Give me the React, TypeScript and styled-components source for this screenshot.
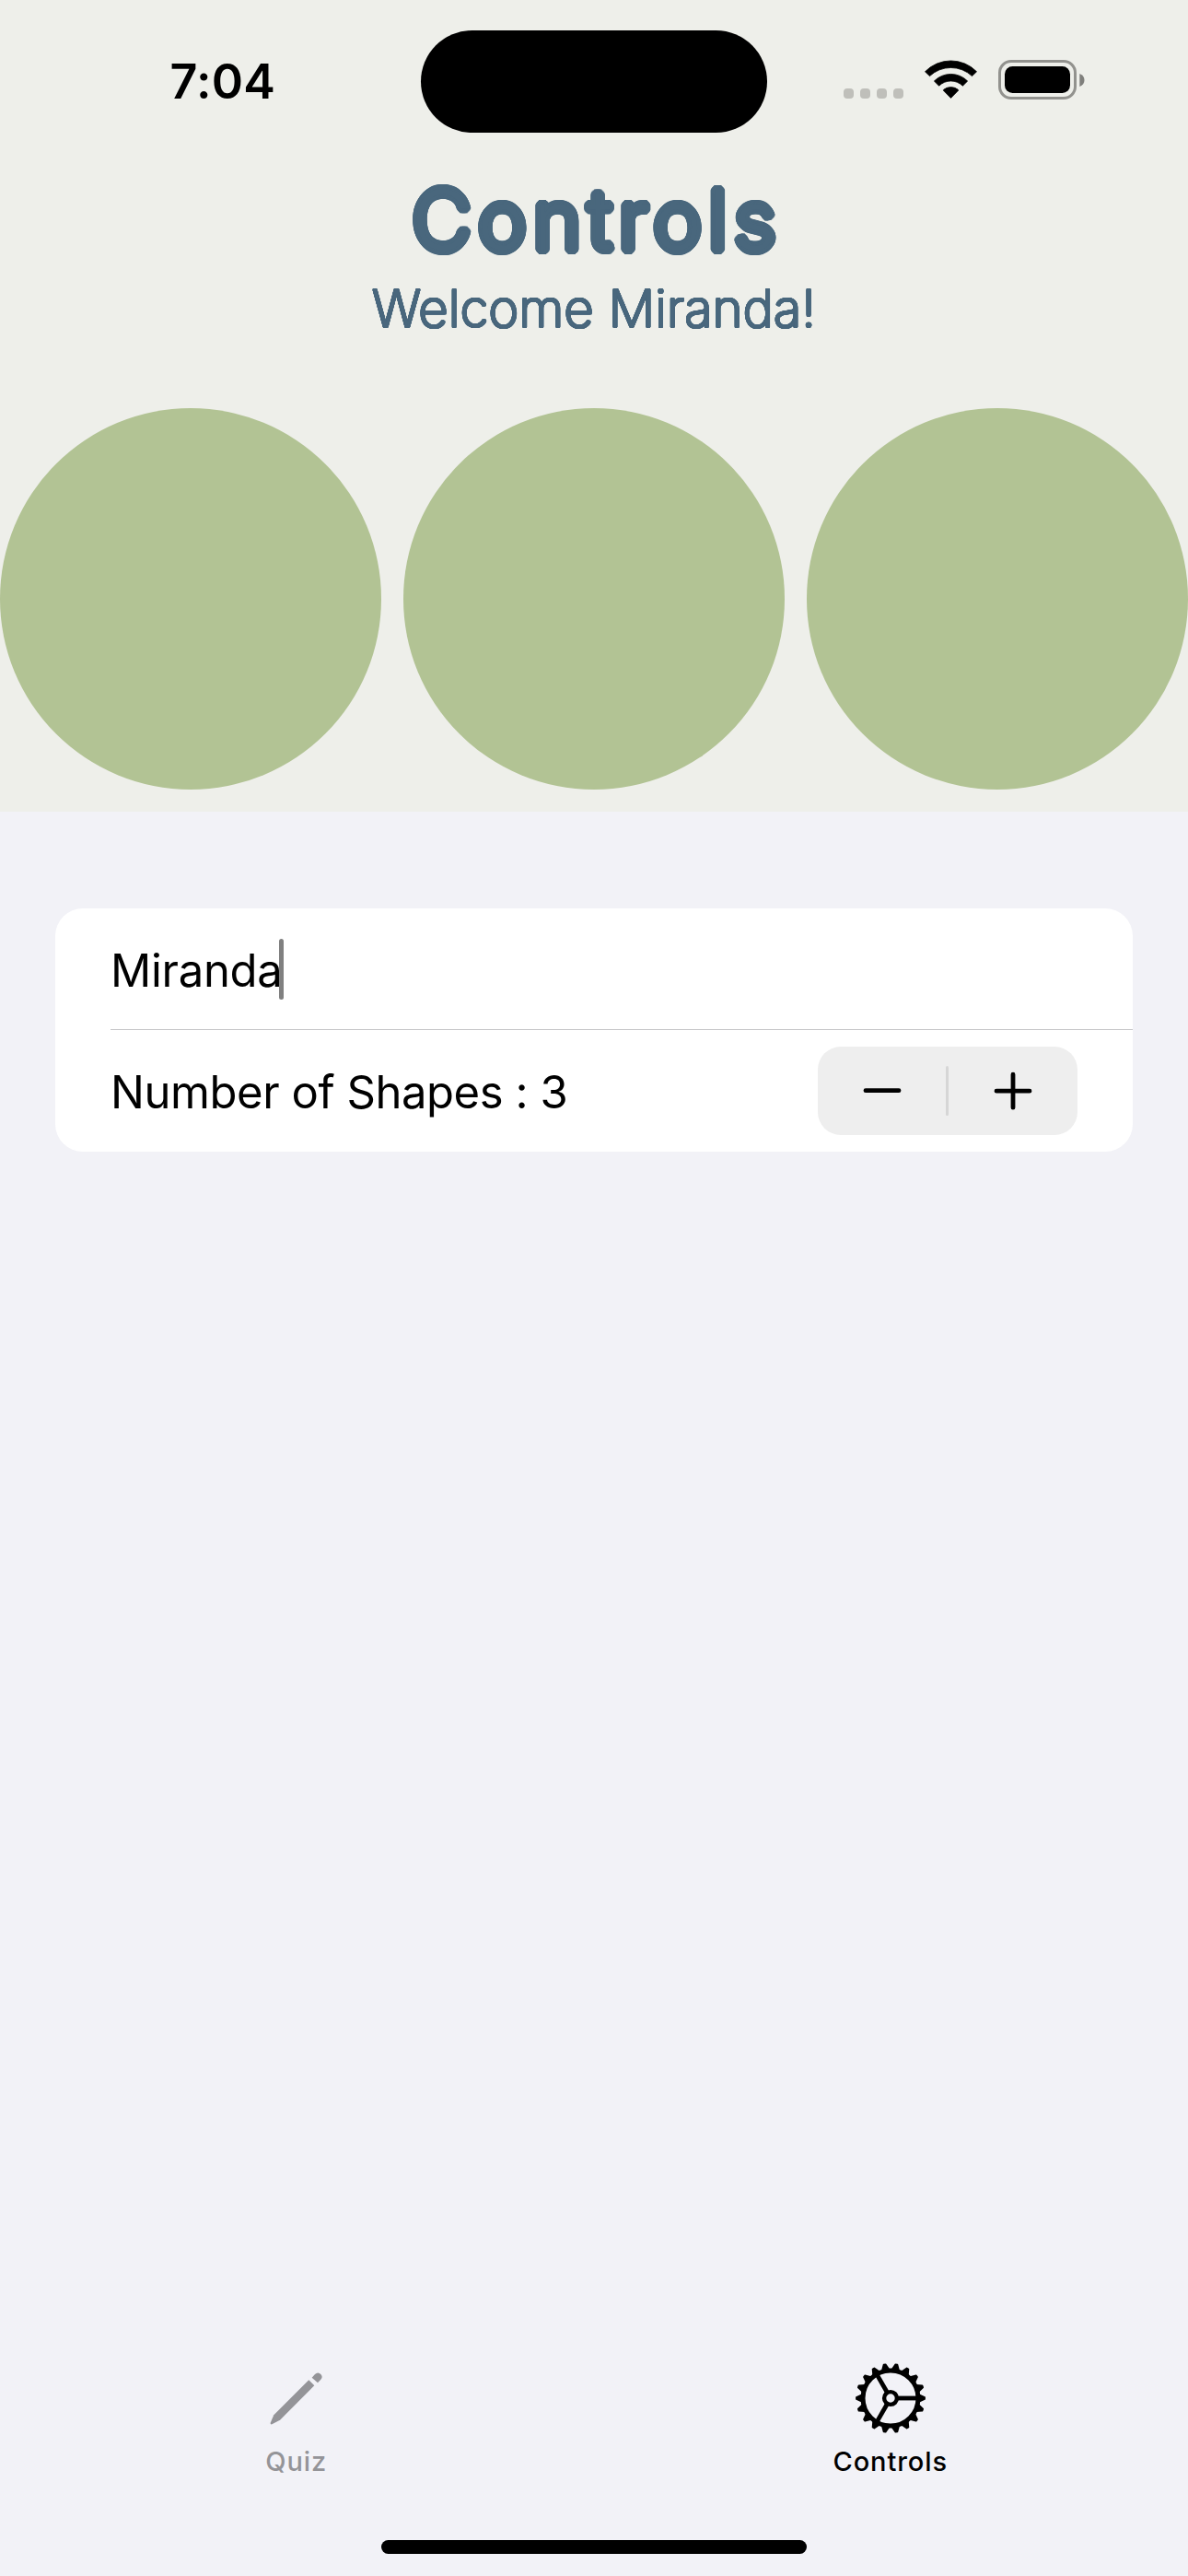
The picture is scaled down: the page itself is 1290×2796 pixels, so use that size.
import React, { useState } from 'react';
import styled, { createGlobalStyle } from 'styled-components';

const GlobalStyle = createGlobalStyle`
  * { box-sizing: border-box; }
  body { margin: 0; background: #f2f2f7; }
  svg { display: block; }
`;

/* Rounded letter ends: a light face thickened by a ring of shadows. */
const rounded = (radius: number, color: string) =>
  Array.from({ length: 24 }, (_, i) => {
    const a = (i * Math.PI) / 12;
    return `${(radius * Math.cos(a)).toFixed(2)}px ${(radius * Math.sin(a)).toFixed(2)}px 0 ${color}`;
  }).join(', ');

const accent = '#49677d';

const Screen = styled.div`
  display: flex;
  flex-direction: column;
  width: 1290px;
  height: 2796px;
  background: #f2f2f7;
  color: #000;
  font-family: Inter, "Liberation Sans", sans-serif;
  white-space: nowrap;
  overflow: hidden;
`;

const Header = styled.header`
  display: flex;
  flex-direction: column;
  height: 881px;
  background: #eeefea;
`;

const StatusBar = styled.div`
  display: flex;
  align-items: center;
  height: 177px;
`;

const Clock = styled.div`
  flex: 0 0 456.7px;
  padding-left: 184.6px;
  font-size: 52px;
  font-weight: 600;
  line-height: 64px;
  letter-spacing: 0.2px;
`;

const Island = styled.div`
  flex: 0 0 376.7px;
  height: 110.6px;
  border-radius: 56px;
  background: #000;
`;

const StatusIcons = styled.div`
  display: flex;
  align-items: center;
  padding: 0 0 4px 82.6px;
`;

const SignalDots = styled.div`
  display: flex;
  gap: 7px;
  margin: 30px 23px 0 0;
`;

const Dot = styled.span`
  width: 11px;
  height: 11px;
  border-radius: 4px;
  background: #bfbfba;
`;

const Battery = styled.div`
  display: flex;
  width: 85px;
  height: 43px;
  margin-left: 23px;
  padding: 4px;
  border: 3px solid #92928e;
  border-radius: 14px;
`;

const BatteryLevel = styled.div`
  flex: 1;
  border-radius: 8.5px;
  background: #000;
`;

const Title = styled.h1`
  margin: 0;
  text-align: center;
  font-size: 89px;
  font-weight: 300;
  line-height: 123px;
  letter-spacing: 7px;
  text-indent: 7px;
  color: ${accent};
  text-shadow: ${rounded(4.7, accent)}, ${rounded(2.4, accent)};
`;

const Welcome = styled.p`
  margin: 0 0 72px;
  text-align: center;
  font-size: 56px;
  font-weight: 200;
  line-height: 71px;
  letter-spacing: 0.2px;
  color: ${accent};
  text-shadow: ${rounded(1.2, accent)};
`;

const Shapes = styled.div`
  display: grid;
  grid-template-columns: repeat(3, 1fr);
  gap: 24px;
`;

const Circle = styled.div`
  height: 414px;
  border-radius: 50%;
  background: #b2c394;
`;

const Form = styled.section`
  margin: 105px 60px 0;
  border-radius: 30px;
  background: #fff;
  font-size: 49px;
  line-height: 60px;
`;

const Row = styled.div<{ $height: number }>`
  display: flex;
  align-items: center;
  justify-content: space-between;
  height: ${p => p.$height}px;
  padding: 0 60px;
`;

const NameField = styled.div`
  position: relative;
  padding-top: 5px;
  letter-spacing: -0.3px;
`;

const Caret = styled.span`
  position: absolute;
  top: 0;
  right: -2px;
  width: 5px;
  height: 66px;
  border-radius: 2.5px;
  background: #808080;
`;

const Divider = styled.div`
  height: 1px;
  margin-left: 60px;
  background: #c6c6c8;
`;

const CountLabel = styled.div`
  padding-top: 4px;
  letter-spacing: -0.45px;
`;

const Stepper = styled.div`
  display: flex;
  align-items: center;
  width: 282px;
  height: 96px;
  border-radius: 25px;
  background: #eeeeee;
`;

const StepButton = styled.button`
  flex: 1;
  display: flex;
  justify-content: center;
  padding: 0;
  border: 0;
  background: none;
`;

const StepDivider = styled.span`
  width: 3px;
  height: 54px;
  margin: 0 0.5px 0 -0.5px;
  border-radius: 1.5px;
  background: #d6d6d6;
`;

const Spacer = styled.div`
  flex: 1;
`;

const TabBar = styled.nav`
  display: grid;
  grid-template-columns: 1fr 1fr;
  margin-bottom: 67px;
`;

const Tab = styled.div<{ $color: string }>`
  display: flex;
  flex-direction: column;
  align-items: center;
  gap: 11px;
  padding-right: 1.6px;
  color: ${p => p.$color};
  font-size: 29px;
  font-weight: 500;
  line-height: 36px;
  letter-spacing: 0.9px;
`;

const TabIcon = styled.div`
  display: flex;
  align-items: center;
  justify-content: center;
  height: 80px;
`;

const HomeIndicator = styled.div`
  width: 462px;
  height: 15px;
  margin: 0 auto 24px;
  border-radius: 8px;
  background: #000;
`;

const WifiIcon = () => (
  <svg width="57" height="43" viewBox="0 0 57 43" fill="#000" stroke="#000" strokeWidth="0.8" strokeLinejoin="round">
    <path d="M0.5 12.8A39 39 0 0 1 56.5 12.8L51.5 17.6A33.5 33.5 0 0 0 5.5 17.6Z" />
    <path d="M10.4 23A25.4 25.4 0 0 1 46.6 23L41.4 28.2A18.5 18.5 0 0 0 15.6 28.2Z" />
    <path d="M20.2 32.9A12 12 0 0 1 36.8 32.9L28.5 41.4Z" />
  </svg>
);

const BatteryCap = () => (
  <svg width="9" height="14" viewBox="0 0 9 14">
    <path d="M3.3 0Q8.5 2 8.5 7T3.3 14Z" fill="#7f7f7c" />
  </svg>
);

const PencilIcon = () => (
  <svg width="60" height="60" viewBox="68 100 180 180" fill="currentColor">
    <path d="M198 131L216 149L104 261L78 275Q72 277 73 270L84 245Z" />
    <path d="M208 123L218 112Q228 103 237 112Q245 121 237 129L227 140Z" />
  </svg>
);

const GearIcon = () => (
  <svg width="78" height="78" viewBox="-39 -39 78 78" fill="none" stroke="currentColor">
    <circle r="30" strokeWidth="5" />
    {Array.from({ length: 18 }, (_, i) => (
      <path
        key={i}
        d="M31 -3.8L37 -1V1L31 3.8Z"
        transform={`rotate(${i * 20})`}
        fill="currentColor"
        strokeWidth="1.8"
        strokeLinejoin="round"
      />
    ))}
    {[0, 120, 240].map(a => (
      <path key={a} d="M7 0H29" strokeWidth="4.8" transform={`rotate(${a})`} />
    ))}
    <circle r="6.9" strokeWidth="4.4" />
  </svg>
);

const StepIcon = ({ plus }: { plus?: boolean }) => (
  <svg width="42" height="42" viewBox="0 0 42 42" stroke="#000" strokeWidth="4.8" strokeLinecap="round">
    <path d={plus ? 'M3 21.2H39M21 3.2V39.2' : 'M3 20.7H39'} />
  </svg>
);

export default function App() {
  const [count] = useState(3);
  const name = 'Miranda';
  return (
    <Screen>
      <GlobalStyle />
      <Header>
        <StatusBar>
          <Clock>7:04</Clock>
          <Island />
          <StatusIcons>
            <SignalDots>
              <Dot />
              <Dot />
              <Dot />
              <Dot />
            </SignalDots>
            <WifiIcon />
            <Battery>
              <BatteryLevel />
            </Battery>
            <BatteryCap />
          </StatusIcons>
        </StatusBar>
        <Title>Controls</Title>
        <Welcome>Welcome {name}!</Welcome>
        <Shapes>
          {Array.from({ length: count }, (_, i) => (
            <Circle key={i} />
          ))}
        </Shapes>
      </Header>
      <Form>
        <Row $height={131}>
          <NameField>
            {name}
            <Caret />
          </NameField>
        </Row>
        <Divider />
        <Row $height={132}>
          <CountLabel>Number of Shapes : {count}</CountLabel>
          <Stepper>
            <StepButton aria-label="Decrement">
              <StepIcon />
            </StepButton>
            <StepDivider />
            <StepButton aria-label="Increment">
              <StepIcon plus />
            </StepButton>
          </Stepper>
        </Row>
      </Form>
      <Spacer />
      <TabBar>
        <Tab $color="#949498">
          <TabIcon>
            <PencilIcon />
          </TabIcon>
          Quiz
        </Tab>
        <Tab $color="#000">
          <TabIcon>
            <GearIcon />
          </TabIcon>
          Controls
        </Tab>
      </TabBar>
      <HomeIndicator />
    </Screen>
  );
}
